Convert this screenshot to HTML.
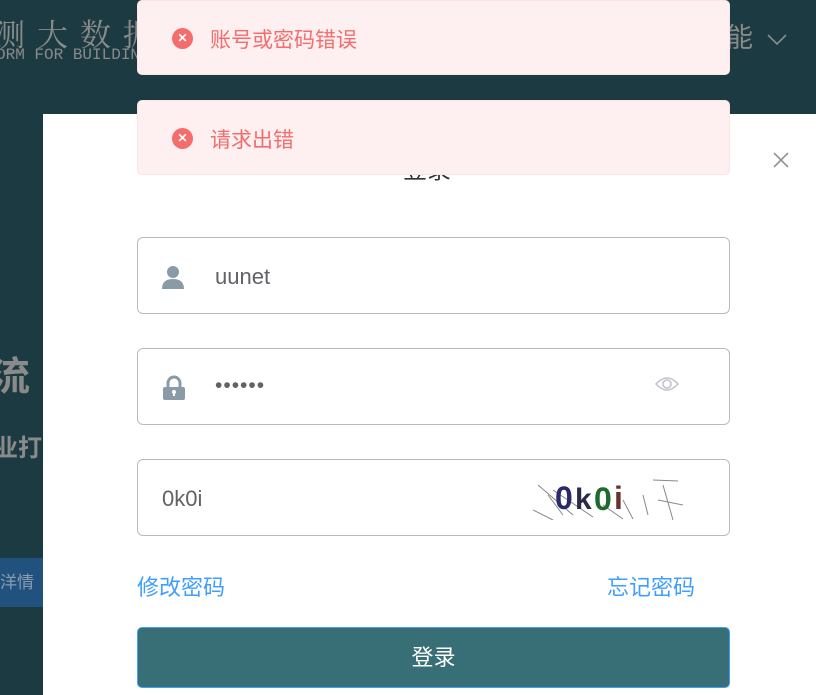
<!DOCTYPE html>
<html><head><meta charset="utf-8"><style>
*{margin:0;padding:0;box-sizing:border-box}
html,body{width:816px;height:695px;overflow:hidden}
body{background:#1c3a41;font-family:"Liberation Sans","Noto Sans CJK SC",sans-serif;position:relative}
.hdr{position:absolute;left:0;top:0;width:816px;height:96px;background:#1b3a41}
.t1{position:absolute;left:-6px;top:10px;font-family:"Liberation Serif","Noto Serif CJK SC",serif;font-size:31px;color:#8a8a8a;letter-spacing:12px}
.t2{position:absolute;left:-4px;top:46px;font-family:"Liberation Mono",monospace;font-size:16px;color:#8a8a8a}
.t3{position:absolute;left:726px;top:16px;font-size:27px;color:#8a8a8a}
.modal{position:absolute;left:43px;top:114px;width:773px;height:581px;background:#fff;overflow:hidden}
.toast{position:absolute;left:137px;width:593px;height:75px;background:#fef0f0;border:1px solid #fde2e2;border-radius:5px;color:#f56c6c;font-size:21px}
.toast .ic{position:absolute;left:34px;top:27px;width:21px;height:21px;border-radius:50%;background:#f56c6c;color:#fff;font-size:12px;line-height:21px;text-align:center;font-weight:bold}
.toast span{position:absolute;left:72px;top:23px}
.inp{position:absolute;left:137px;width:593px;height:77px;border:1px solid #bbb;border-radius:6px;background:#fff;font-size:22px;color:#606266}
.link{position:absolute;top:570px;font-size:22px;color:#409eff}
.btn{position:absolute;left:137px;top:627px;width:593px;height:61px;background:#386f76;border:1px solid #409eff;border-radius:5px;color:#fff;font-size:22px;text-align:center;line-height:59px}
</style></head><body>
<div class="hdr">
<div class="t1">测大数据</div>
<div class="t2">ORM FOR BUILDING</div>
<div class="t3">能 <svg width="20" height="12" style="vertical-align:middle;margin-left:6px"><path d="M1 1L10 10L19 1" fill="none" stroke="#8a8a8a" stroke-width="1.6"/></svg></div>
</div>
<div style="position:absolute;left:-10px;top:344px;font-size:40px;font-weight:bold;color:#8a8a8a">流</div>
<div style="position:absolute;left:-6px;top:428px;font-size:24px;font-weight:bold;color:#8a8a8a">业打</div>
<div style="position:absolute;left:0;top:558px;width:43px;height:49px;background:#21527e;color:#8a9bb0;font-size:17px;line-height:49px">洋情</div>
<div class="modal">
<div style="position:absolute;left:360px;top:36px;font-size:24px;color:#333">登录</div>
<svg style="position:absolute;left:729px;top:37px" width="18" height="18"><path d="M2 2L16 16M16 2L2 16" stroke="#909399" stroke-width="1.6"/></svg>
</div>
<div class="toast" style="top:0"><div class="ic">✕</div><span>账号或密码错误</span></div>
<div class="toast" style="top:100px"><div class="ic">✕</div><span>请求出错</span></div>
<div class="inp" style="top:237px">
<svg style="position:absolute;left:24px;top:27px" width="22" height="24"><circle cx="11" cy="7" r="6" fill="#8a9ba8"/><path d="M0 24Q0 14 11 14Q22 14 22 24Z" fill="#8a9ba8"/></svg>
<span style="position:absolute;left:77px;top:26px">uunet</span></div>
<div class="inp" style="top:348px">
<svg style="position:absolute;left:24px;top:26px" width="24" height="26"><path d="M6 12V8a6 6 0 0 1 12 0v4" fill="none" stroke="#8a9ba8" stroke-width="3"/><rect x="1" y="12" width="22" height="13" rx="2" fill="#8a9ba8"/><circle cx="12" cy="17" r="2" fill="#fff"/><rect x="11" y="17" width="2" height="4" fill="#fff"/></svg>
<span style="position:absolute;left:77px;top:25px;letter-spacing:1px;font-size:21px">••••••</span>
<svg style="position:absolute;left:517px;top:26px" width="24" height="18"><path d="M1 9Q12 -3 23 9Q12 21 1 9Z" fill="none" stroke="#c0c4cc" stroke-width="1.6"/><circle cx="12" cy="9" r="4" fill="none" stroke="#c0c4cc" stroke-width="1.6"/></svg>
</div>
<div class="inp" style="top:459px">
<span style="position:absolute;left:24px;top:26px">0k0i</span>
<svg style="position:absolute;left:395px;top:15px" width="150" height="45"><g stroke="#888" stroke-width="1"><path d="M5 10L40 40M15 20L30 40M20 15L60 42M70 30L90 44M120 5L145 6M130 10L140 45M125 25L150 30M110 20L115 40M0 35L20 45M90 25L100 44"/></g><text x="22" y="34" font-family="Liberation Sans" font-weight="bold" font-size="32" fill="#2a2a6a">0</text><text x="42" y="34" font-family="Liberation Sans" font-weight="bold" font-size="30" fill="#2a2a4a">k</text><text x="61" y="35" font-family="Liberation Sans" font-weight="bold" font-size="32" fill="#1f6a2f">0</text><text x="81" y="34" font-family="Liberation Sans" font-weight="bold" font-size="32" fill="#6a3030">i</text></svg>
</div>
<div class="link" style="left:137px">修改密码</div>
<div class="link" style="left:607px">忘记密码</div>
<div class="btn">登录</div>
</body></html>
